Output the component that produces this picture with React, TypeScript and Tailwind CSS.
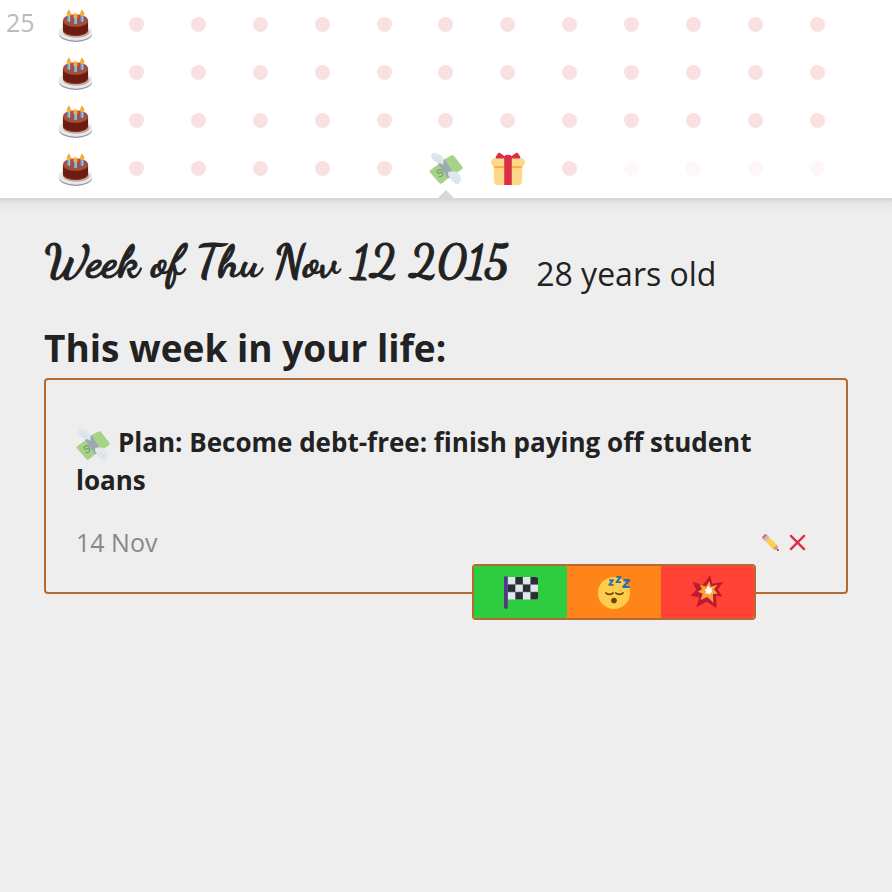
import type { ReactNode } from "react";

function Emoji({ viewBox = "0 0 36 36", className, children }: { viewBox?: string; className: string; children: ReactNode }) {
  return (
    <svg viewBox={viewBox} className={className} aria-hidden="true">
      {children}
    </svg>
  );
}

function Cake() {
  return (
    <Emoji viewBox="175 23 103 103" className="size-[34px]">
      <ellipse cx="228.500" cy="101" rx="51" ry="25" fill="#8899a6" />
      <ellipse cx="228.500" cy="97" rx="51.500" ry="25" fill="#e6e9ec" />
      <ellipse cx="230" cy="96" rx="40" ry="17" fill="#c9a49c" />
      <path d="M190 64v27c0 9 17 17 38 17s38-8 38-17V64z" fill="#8a3a2a" />
      <path d="M190 62v27c0 9 17 16 38 16s38-7 38-16V62z" fill="#691e10" />
      <path d="M190 62c3 26 73 26 76 0v6c-4 18-72 18-76 0z" fill="#7c2a1b" />
      <ellipse cx="228" cy="61" rx="38" ry="19" fill="#a5503f" />
      <path d="M204 43h8v20q-4 4-8 0zM244 43h8v20q-4 4-8 0zM224 52h8v19q-4 3-8 0z" fill="#8bcaf7" />
      <path d="M204 46h3v18h-3zM244 46h3v18h-3zM224 54h3v17h-3z" fill="#5c9bd2" />
      <path d="M208 27c3 6 7 9 7 14a7 6 0 0 1-14 0c0-5 4-8 7-14zM248 27c3 6 7 9 7 14a7 6 0 0 1-14 0c0-5 4-8 7-14zM228 36c3 6 7 7 7 12a7 6 0 0 1-14 0c0-5 4-6 7-12z" fill="#ffac33" />
    </Emoji>
  );
}

function Money() {
  return (
    <Emoji viewBox="50 34 103 103" className="size-[34px]">
      <path d="M52 90l32-23 27 44-21 18q-5 3-9-1L53 96q-3-4-1-6z" fill="#a6d388" />
      <path d="M95 57l21-12q6-3 10 1l25 33q3 4-1 7l-26 17z" fill="#a6d388" />
      <path d="M77 69l20-13 30 46-19 12z" fill="#9aaab4" />
      <path d="M90 93c-1-7-11-6-16-1 1 3 2 7 5 7 4-2 9-5 12-1 3 7-5 13-11 10" fill="none" stroke="#5c7f63" strokeWidth="3" />
      <path d="M92 76c-1-6-4-9-8-8-5 2-9-1-9-4-6 2-10-2-9-6-6 0-8-4-6-7-5-2-5-6-3-9 1-6 9-7 15-4 9 2 15 5 18 11 5 5 5 15 2 27z" fill="#e1e8ed" />
      <path d="M60 52q7 3 15-1M66 59q9 1 15-4M75 65q7 0 12-5" fill="none" stroke="#ccd6dd" strokeWidth="2" />
      <path d="M108 95c8-3 15-4 20-2 8 2 15 7 17 14 3 4 2 8 0 10 3 4 1 8-2 8 0 5-4 8-8 6-5 1-8-2-8-6-5 1-9-2-8-7-7-1-7-5-5-8-5-1-7-7-6-15z" fill="#e1e8ed" />
      <path d="M119 118q3-7 9-7M127 125q2-7 8-8M136 130q1-6 7-7" fill="none" stroke="#ccd6dd" strokeWidth="2" />
    </Emoji>
  );
}

function Gift() {
  return (
    <Emoji className="size-[34px]">
      <path fill="#FDD888" d="M33 31c0 2.200-1.800 4-4 4H7c-2.200 0-4-1.800-4-4V14c0-2.200 1.800-4 4-4h22c2.200 0 4 1.800 4 4v17z" />
      <path fill="#FDD888" d="M36 11c0 2.200-1.800 4-4 4H4c-2.200 0-4-1.800-4-4s1.800-4 4-4h28c2.200 0 4 1.800 4 4z" />
      <path fill="#FCAB40" d="M3 15h30v2H3z" />
      <path fill="#DA2F47" d="M19 3h-2c-1.657 0-3 1.343-3 3v29h8V6c0-1.656-1.343-3-3-3z" />
      <path fill="#DA2F47" d="M16 7c1.100 0 1.263-.516.361-1.147L9.639 1.147c-.902-.631-2.085-.366-2.631.589L4.992 5.264C4.446 6.219 4.900 7 6 7h10zm4 0c-1.100 0-1.263-.516-.361-1.147l6.723-4.706c.901-.631 2.085-.366 2.631.589l2.016 3.527C31.554 6.219 31.100 7 30 7H20z" />
    </Emoji>
  );
}

function Pencil() {
  return (
    <Emoji className="size-[17px]">
      <path fill="#D99E82" d="M35.222 33.598c-.647-2.101-1.705-6.059-2.325-7.566-.501-1.216-.969-2.438-1.544-3.014-.575-.575-1.553-.53-2.143.058 0 0-2.469 1.675-3.354 2.783-1.108.882-2.785 3.357-2.785 3.357-.59.59-.635 1.567-.06 2.143.576.575 1.798 1.043 3.015 1.544 1.506.62 5.465 1.676 7.566 2.325.359.11 1.740-1.271 1.630-1.630z" />
      <path fill="#EA596E" d="M13.643 5.308c1.151 1.151 1.151 3.016 0 4.167l-4.167 4.168c-1.151 1.150-3.018 1.150-4.167 0L1.141 9.475c-1.150-1.151-1.150-3.016 0-4.167l4.167-4.167c1.150-1.151 3.016-1.151 4.167 0l4.168 4.167z" />
      <path fill="#FFCC4D" d="M31.353 23.018l-4.170 4.170-4.163 4.165L7.392 15.726l8.335-8.334 15.626 15.626z" />
      <path fill="#292F33" d="M32.078 34.763s2.709 1.489 3.441.757c.732-.732-.765-3.435-.765-3.435s-2.566.048-2.676 2.678z" />
      <path fill="#CCD6DD" d="M2.183 10.517l8.335-8.335 5.208 5.209-8.334 8.335z" />
      <path fill="#99AAB5" d="M3.225 11.558l8.334-8.334 1.042 1.042L4.267 12.600zm2.083 2.086l8.335-8.335 1.042 1.042-8.335 8.334z" />
    </Emoji>
  );
}

function Cross() {
  return (
    <Emoji className="size-[17px]">
      <path d="M4 4l28 28M32 4L4 32" stroke="#DD2E44" strokeWidth="5" strokeLinecap="round" />
    </Emoji>
  );
}

function Flag() {
  return (
    <Emoji className="size-[34px]">
      <path fill="#e1e8ed" d="M4 2h30a2 2 0 0 1 2 2v20a2 2 0 0 1-2 2H4z" />
      <path fill="#292f33" d="M12 2h8v8h-8zM28 2h6a2 2 0 0 1 2 2v6h-8zM4 10h8v8H4zM20 10h8v8h-8zM12 18h8v8h-8zM28 18h8v6a2 2 0 0 1-2 2h-6z" />
      <path d="M4 10h32M4 18h32" stroke="#66757f" strokeWidth="1" opacity=".6" />
      <path fill="#553788" d="M4 34a2 2 0 0 1-4 0V3a2 2 0 0 1 4 0z" />
    </Emoji>
  );
}

function Sleepy() {
  return (
    <Emoji className="size-[34px]">
      <circle cx="18" cy="19" r="17" fill="#ffcc4d" />
      <circle cx="18" cy="27" r="3" fill="#664500" />
      <path d="M9.500 19c1.500 2 6 2 7.500 0M20 19c1.500 2 6 2 7.500 0" fill="none" stroke="#664500" strokeWidth="1.800" strokeLinecap="round" />
      <g fill="none" stroke="#2f6ea8" strokeWidth="2" strokeLinejoin="round">
        <path d="M13 5.500h4l-4 5h4.500" />
        <path d="M20.500 2h4.500l-4.500 5.500h5" />
        <path d="M28 5.500h6l-6 7h6.500" strokeWidth="2.500" />
      </g>
    </Emoji>
  );
}

function Boom() {
  return (
    <Emoji viewBox="238 60 102 102" className="size-[34px]">
      <path d="M298 61l7 25 33-5-17 22 14 22-19-3 2 38-30-20-31 17 9-30-26-5 17-17-12-24 32 8z" fill="#be1931" />
      <path d="M296 78l5 17 20-6-11 14 11 13-14 1 1 26-18-17-20 9 6-19-15-6 13-7-7-15 19 7z" fill="#f9a139" />
      <path d="M294 93l4 7 7-2-3 7 4 7-6 1-3 7-5-5-8 1 2-7-5-5 7-2 1-6z" fill="#fff" />
    </Emoji>
  );
}

const WEEKS = Array.from({ length: 13 }, (_, i) => i);
const YEARS = [25, 26, 27, 28];

function Week({ year, week }: { year: number; week: number }) {
  const current = year === 28 && week === 6;
  const future = year === 28 && week > 8;
  let mark: ReactNode = <span className={`size-[15px] rounded-full ${future ? "bg-[#fdf6fb]" : "bg-[#f9e1e1]"}`} />;
  if (week === 0) mark = <Cake />;
  if (current) mark = <Money />;
  if (year === 28 && week === 7) mark = <Gift />;
  return (
    <button type="button" aria-label={`Age ${year}, week ${week + 1}`} className="relative flex h-12 items-center justify-center pt-px">
      {mark}
      {current && (
        <span className="absolute -bottom-1.5 left-1/2 size-0 -translate-x-1/2 border-x-8 border-b-8 border-x-transparent border-b-[#d8d8d8]" />
      )}
    </button>
  );
}

export default function App() {
  return (
    <div className="flex min-h-screen flex-col bg-[#eeeeee] font-['Open_Sans','Noto_Sans',sans-serif] text-[#222222]">
      <section aria-label="Weeks of your life" className="bg-white pb-1.5">
        {YEARS.map((year) => (
          <div key={year} className="flex pr-11">
            <div className="flex w-11 items-center pb-1 pl-1.5 text-[25px] leading-none font-medium text-[#bbbbbb]">{year % 5 === 0 && year}</div>
            <div className="grid flex-1 grid-cols-13">
              {WEEKS.map((week) => (
                <Week key={week} year={year} week={week} />
              ))}
            </div>
          </div>
        ))}
      </section>

      <main className="flex-1 bg-[linear-gradient(#d4d4d4,#e4e4e4_5px,#ebebeb_10px,#eeeeee_16px)] px-11 pt-7">
        <header className="flex items-end gap-7">
          <h1 className="font-['Dancing_Script',cursive] text-[46px] leading-[72px] font-bold whitespace-nowrap [-webkit-text-stroke:1px_#222222]">
            Week of Thu Nov 12 2015
          </h1>
          <p className="text-[32px] leading-[48px] whitespace-nowrap">28 years old</p>
        </header>

        <h2 className="mt-6 pb-1 text-[37px] leading-[52px] font-bold">This week in your life:</h2>

        <article className="relative rounded border-2 border-[#b56a30] px-[30px] pt-[43px] pb-[31px]">
          <h3 className="text-[26px] leading-[38px] font-bold">
            <span className="-my-2 mr-2 inline-block align-middle">
              <Money />
            </span>
            Plan: Become debt-free: finish paying off student loans
          </h3>
          <div className="mt-6 flex items-center justify-between pr-2.5">
            <time className="text-[25px] leading-[38px] text-[#888888]">14 Nov</time>
            <div className="flex gap-2.5">
              <button type="button" aria-label="Edit"><Pencil /></button>
              <button type="button" aria-label="Delete"><Cross /></button>
            </div>
          </div>
          <div className="absolute right-[90px] -bottom-7 flex h-14 w-[284px] overflow-hidden rounded border-2 border-[#b56a30]">
            <button type="button" aria-label="Done" className="flex flex-1 items-center justify-center bg-[#2ecc40]"><Flag /></button>
            <button type="button" aria-label="Postpone" className="flex flex-1 items-center justify-center bg-[#ff851b]"><Sleepy /></button>
            <button type="button" aria-label="Abandon" className="flex flex-1 items-center justify-center bg-[#ff4136]"><Boom /></button>
          </div>
        </article>
      </main>
    </div>
  );
}
